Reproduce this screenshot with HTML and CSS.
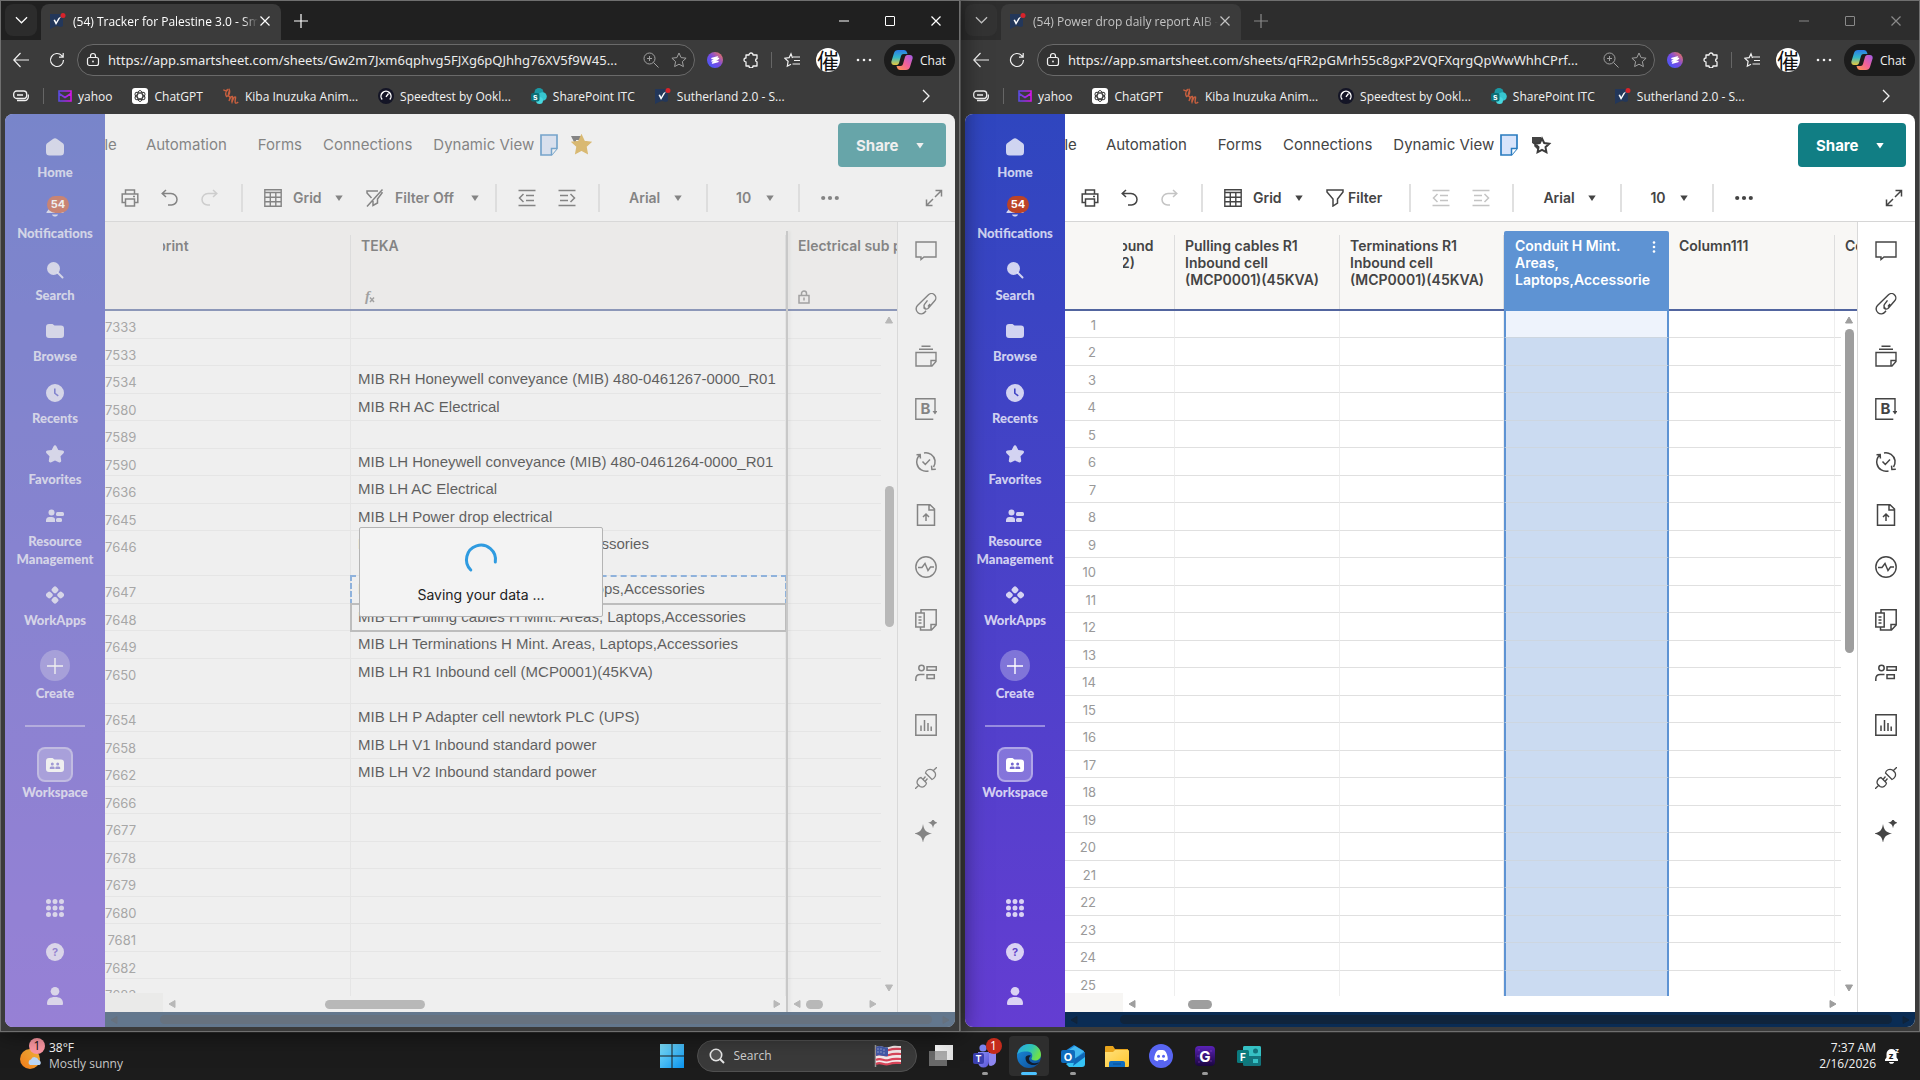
FILE: index.html
```html
<!DOCTYPE html>
<html lang="en">
    <head>
        <meta charset="utf-8">
        <title>Desktop</title>
        <link rel="stylesheet" href="styles.css">
    </head>
    <body>
        <svg class="sprite" aria-hidden="true">
            <defs>
                <linearGradient id="g-yahoo" x1="0" x2="1"><stop offset="0" stop-color="#5a4be0"/><stop offset="1" stop-color="#d414e8"/></linearGradient>
                <linearGradient id="g-ext" x1="0" y1="1" x2="1" y2="0"><stop offset="0" stop-color="#3a5bff"/><stop offset=".5" stop-color="#7a4be0"/><stop offset="1" stop-color="#ff7a4a"/></linearGradient>
                <linearGradient id="g-cop1" x1="0" y1="0" x2="0" y2="1"><stop offset="0" stop-color="#2a7be8"/><stop offset=".5" stop-color="#35b8c8"/><stop offset="1" stop-color="#e8c83a"/></linearGradient>
                <linearGradient id="g-cop2" x1="1" y1="0" x2="0" y2="1"><stop offset="0" stop-color="#a05be8"/><stop offset=".5" stop-color="#f0609a"/><stop offset="1" stop-color="#ff9a4a"/></linearGradient>
                <linearGradient id="g-win" x1="0" y1="0" x2="1" y2="1"><stop offset="0" stop-color="#7fe0fb"/><stop offset="1" stop-color="#0a93ee"/></linearGradient>
                <linearGradient id="g-sun" x1="1" y1="0" x2="0" y2="1"><stop offset="0" stop-color="#f6b73c"/><stop offset="1" stop-color="#ef7a1a"/></linearGradient>
                <linearGradient id="g-edge" x1="0" y1="0" x2="1" y2=".4"><stop offset="0" stop-color="#2aa9e8"/><stop offset=".6" stop-color="#2fc4b4"/><stop offset="1" stop-color="#6fe04a"/></linearGradient>
                <linearGradient id="g-edge2" x1="0" y1="0" x2="1" y2="1"><stop offset="0" stop-color="#1b8ee0"/><stop offset="1" stop-color="#0c4a94"/></linearGradient>
                <linearGradient id="g-folder" x1="0" y1="0" x2="1" y2="1"><stop offset="0" stop-color="#ffe07a"/><stop offset="1" stop-color="#ffc62e"/></linearGradient>
                <linearGradient id="g-teams" x1="0" y1="0" x2="1" y2="1"><stop offset="0" stop-color="#8d92f5"/><stop offset="1" stop-color="#5a55d8"/></linearGradient>
                <linearGradient id="g-app" x1="0" y1="0" x2="0" y2="1"><stop offset="0" stop-color="#5a22b8"/><stop offset="1" stop-color="#1a0540"/></linearGradient>
                <linearGradient id="g-task" x1="0" y1="0" x2="1" y2="1"><stop offset="0" stop-color="#fff"/><stop offset="1" stop-color="#ddd"/></linearGradient>
            </defs>

            <!-- browser chrome -->
            <symbol id="chevron-down" viewBox="0 0 14 8"><path d="M1 1l6 6 6-6" fill="none" stroke="currentColor" stroke-width="1.3"/></symbol>
            <symbol id="chevron-right" viewBox="0 0 8 14"><path d="M1 1l6 6-6 6" fill="none" stroke="currentColor" stroke-width="1.3"/></symbol>
            <symbol id="smartsheet" viewBox="0 0 16 16"><path d="M0 1h13v12l-2 1-4-1-3 1-4 2z" fill="#23375a"/><path d="M3.5 7l2.500 5L11 3.500 8.500 5 6.200 9 5 6.500z" fill="#fff"/><circle cx="13" cy="2.500" r="2.500" fill="#d8232a"/></symbol>
            <symbol id="close" viewBox="0 0 10 10"><path d="M.5.5l9 9m0-9l-9 9" stroke="currentColor" stroke-width="1.200"/></symbol>
            <symbol id="plus" viewBox="0 0 14 14"><path d="M7 0v14M0 7h14" stroke="currentColor" stroke-width="1.200"/></symbol>
            <symbol id="min" viewBox="0 0 10 10"><path d="M0 5h10" stroke="currentColor"/></symbol>
            <symbol id="max" viewBox="0 0 10 10"><rect x=".5" y=".5" width="9" height="9" rx=".5" fill="none" stroke="currentColor"/></symbol>
            <symbol id="back" viewBox="0 0 16 16"><path d="M16 8H1M7.500 1L.8 8l6.700 7" fill="none" stroke="currentColor" stroke-width="1.200"/></symbol>
            <symbol id="reload" viewBox="0 0 16 16"><path d="M14.500 8A6.500 6.500 0 1 1 12.800 3.600L14 5M14.200 1v4.200H10" fill="none" stroke="currentColor" stroke-width="1.200"/></symbol>
            <symbol id="lock" viewBox="0 0 14 16"><rect x="1.500" y="5.500" width="11" height="8" rx="2" fill="none" stroke="currentColor" stroke-width="1.200"/><path d="M4.500 5.500V4a2.500 2.500 0 0 1 5 0v1.500" fill="none" stroke="currentColor" stroke-width="1.200"/><circle cx="7" cy="9.500" r=".9" fill="currentColor"/></symbol>
            <symbol id="zoom" viewBox="0 0 16 16"><circle cx="6.500" cy="6.500" r="5.500" fill="none" stroke="currentColor"/><path d="M10.500 10.500l5 5M6.500 4v5M4 6.500h5" stroke="currentColor"/></symbol>
            <symbol id="star-line" viewBox="0 0 16 16"><path d="M8 1l2.100 4.600 5 .6-3.700 3.400 1 5L8 12.200l-4.400 2.400 1-5L.9 6.200l5-.6z" fill="none" stroke="currentColor" stroke-linejoin="round"/></symbol>
            <symbol id="ext" viewBox="0 0 16 16"><circle cx="8" cy="8" r="8" fill="url(#g-ext)"/><path d="M5 6.500l5.500-1.500L5 9l6.500-2.500L5.500 11l5.500-1.500" fill="none" stroke="#fff" stroke-width="1.500" stroke-linecap="round" stroke-linejoin="round"/></symbol>
            <symbol id="puzzle" viewBox="0 0 16 16"><path d="M3 3h3a2 2 0 0 1 4 0h4v3.500a1.800 1.800 0 0 0 0 3.500v4h-4a2 2 0 0 1-4 0H3v-4a2 2 0 0 1 0-4z" fill="none" stroke="currentColor" stroke-width="1.300" stroke-linejoin="round"/></symbol>
            <symbol id="favs" viewBox="0 0 16 16"><path d="M8.500 6L7 1.800 5.200 5.600.7 6.200l3.400 3.100-.8 4.900 3.700-2M9 5h7M10 8.500h6M8.500 12H16" fill="none" stroke="currentColor" stroke-width="1.200"/></symbol>
            <symbol id="dots" viewBox="0 0 16 4"><circle cx="2" cy="2" r="1.300" fill="currentColor"/><circle cx="8" cy="2" r="1.300" fill="currentColor"/><circle cx="14" cy="2" r="1.300" fill="currentColor"/></symbol>
            <symbol id="copilot" viewBox="0 0 22 20"><path d="M7 0h6a3 3 0 0 1 3 2.500L16.500 4h-4c-1.500 0-2 .7-2.500 2L8 13c-.5 1.500-1.500 2-3 2H3c-2 0-3-1.500-2.600-3.500L3 3c.6-2 2-3 4-3z" fill="url(#g-cop1)"/><path d="M15 20H9a3 3 0 0 1-3-2.500L5.500 16h4c1.500 0 2-.7 2.500-2L14 7c.5-1.500 1.500-2 3-2h2c2 0 3 1.500 2.600 3.500L19 17c-.6 2-2 3-4 3z" fill="url(#g-cop2)"/></symbol>
            <symbol id="tabs" viewBox="0 0 16 12"><rect x=".7" y="1" width="13" height="7.500" rx="3" fill="none" stroke="currentColor" stroke-width="1.300"/><path d="M4 5h6M15.300 4.500V7a3.500 3.500 0 0 1-3.500 3.500H4" fill="none" stroke="currentColor" stroke-width="1.300"/></symbol>
            <symbol id="mail" viewBox="0 0 14 12"><path d="M1 1h12v10H1zM1 3.500l6 4 6-4" fill="none" stroke="url(#g-yahoo)" stroke-width="1.600"/></symbol>
            <symbol id="gpt" viewBox="0 0 16 16"><rect width="16" height="16" rx="3" fill="#fff"/><g fill="none" stroke="#333" stroke-width=".9"><ellipse cx="8" cy="8" rx="2.700" ry="5.500"/><ellipse cx="8" cy="8" rx="2.700" ry="5.500" transform="rotate(60 8 8)"/><ellipse cx="8" cy="8" rx="2.700" ry="5.500" transform="rotate(120 8 8)"/></g></symbol>
            <symbol id="kiba" viewBox="0 0 16 16"><path d="M.5 1.500c1 2 3 1 5-.5C3 3 2 6 3.500 8.500 6 8 7 5 6.500 2.500c-1.500 4-1.500 6 .5 6.500 0 2-.5 3-1 4 1-3 2.500-5 3.500-4.500.5 1-1 4-.5 5.500 1-3 2.300-5.800 3.500-5 .5 1.500-1.200 4.500 0 6 1 .5 2-.3 2.700-1" fill="none" stroke="#c9603f" stroke-width="1.400"/></symbol>
            <symbol id="speed" viewBox="0 0 16 16"><circle cx="8" cy="8" r="8" fill="#141526"/><path d="M4.200 11.500a5 5 0 1 1 7.600 0M8 8.800l2.500-3.300" fill="none" stroke="#fff" stroke-width="1.400"/></symbol>
            <symbol id="sharepoint" viewBox="0 0 16 16"><circle cx="8" cy="4.500" r="4.500" fill="#1b9aa6"/><circle cx="11.500" cy="8.500" r="4.300" fill="#37c6d0"/><circle cx="8.500" cy="12.500" r="3.500" fill="#48d8e0"/><rect y="5" width="8.500" height="8.500" rx="2" fill="#0b6f77"/><text class="glyph" x="4.200" y="12" font-size="8" fill="#fff">s</text></symbol>

            <!-- sheet side menu -->
            <symbol id="home" viewBox="0 0 18 18"><path d="M0 8c0-1.500.5-2.200 1.500-3L7 1a3.300 3.300 0 0 1 4 0l5.500 4c1 .8 1.500 1.500 1.500 3v6a3.500 3.500 0 0 1-3.500 3.500h-11A3.500 3.500 0 0 1 0 14z" fill="currentColor"/></symbol>
            <symbol id="bell" viewBox="0 0 18 18"><path d="M9 0a6 6 0 0 1 6 6v4l2.500 3v1H.5v-1L3 10V6a6 6 0 0 1 6-6zM6 15.500h6c-.5 1.500-1.600 2-3 2s-2.500-.5-3-2z" fill="currentColor"/></symbol>
            <symbol id="search" viewBox="0 0 18 18"><circle cx="7.500" cy="7.500" r="6.500" fill="currentColor"/><path d="M12 12l4.500 4.500" stroke="currentColor" stroke-width="2" stroke-linecap="round"/></symbol>
            <symbol id="folder" viewBox="0 0 18 18"><path d="M0 5a3 3 0 0 1 3-3h3.500l2 1.500H15a3 3 0 0 1 3 3V13a3 3 0 0 1-3 3H3a3 3 0 0 1-3-3z" fill="currentColor"/></symbol>
            <symbol id="clock" viewBox="0 0 18 18"><path fill-rule="evenodd" d="M9 0a9 9 0 1 1 0 18A9 9 0 0 1 9 0zM8 4.500v5l3.800 3 .9-1.200L9.600 8.900V4.500z" fill="currentColor"/></symbol>
            <symbol id="star" viewBox="0 0 18 18"><path d="M9 .3c.7 0 1.100.4 1.400 1l1.900 3.700 4.200.6c1.400.2 2 1.600 1 2.600l-3 3 .7 4.200c.2 1.500-1.200 2.400-2.500 1.800L9 15.500l-3.700 1.700c-1.300.6-2.700-.3-2.500-1.800l.7-4.200-3-3c-1-1-.4-2.400 1-2.600L5.700 5l1.900-3.700c.3-.6.700-1 1.400-1z" fill="currentColor"/></symbol>
            <symbol id="people" viewBox="0 0 18 18"><circle cx="5.500" cy="5.500" r="3" fill="currentColor"/><path d="M0 15v-1.500A3.500 3.500 0 0 1 3.500 10H6a3.500 3.500 0 0 1 3 1.700V15z" fill="currentColor"/><rect x="10" y="5" width="8" height="4" rx="1.500" fill="currentColor"/><rect x="10" y="11" width="6" height="4" rx="1.500" fill="currentColor"/></symbol>
            <symbol id="apps" viewBox="0 0 18 18"><g fill="currentColor"><rect x="6" y=".8" width="6" height="6" rx="2" transform="rotate(45 9 3.800)"/><rect x="6" y="11.200" width="6" height="6" rx="2" transform="rotate(45 9 14.200)"/><rect x=".3" y="6" width="6" height="6" rx="2" transform="rotate(45 3.300 9)"/><rect x="11.700" y="6" width="6" height="6" rx="2" transform="rotate(45 14.700 9)"/></g></symbol>
            <symbol id="workspace" viewBox="0 0 18 18"><path d="M0 5a3 3 0 0 1 3-3h3.500l2 1.500H15a3 3 0 0 1 3 3V13a3 3 0 0 1-3 3H3a3 3 0 0 1-3-3z" fill="#fff"/><g fill="#7468cf"><circle cx="6.300" cy="8" r="1.500"/><circle cx="11.700" cy="8" r="1.500"/><path d="M3.800 13v-1.200c0-1 .8-1.400 2.500-1.400s2.300.4 2.300 1.400V13zM9.400 13v-1.200c0-1 .6-1.400 2.300-1.400s2.500.4 2.500 1.400V13z"/></g></symbol>
            <symbol id="grid9" viewBox="0 0 18 18"><path d="M2.500 2.500h0M9 2.500h0M15.500 2.500h0M2.500 9h0M9 9h0M15.500 9h0M2.500 15.500h0M9 15.500h0M15.500 15.500h0" stroke="currentColor" stroke-width="5" stroke-linecap="round"/></symbol>
            <symbol id="help" viewBox="0 0 18 18"><circle cx="9" cy="9" r="9" fill="currentColor"/><text class="glyph" x="9" y="13" font-size="11" fill="#6246c8">?</text></symbol>
            <symbol id="user" viewBox="0 0 18 18"><circle cx="9" cy="4.300" r="4.300" fill="currentColor"/><path d="M1 16.500C1 12 4 10 9 10s8 2 8 6.500c0 1-.5 1.500-1.500 1.500h-13C1.500 18 1 17.500 1 16.500z" fill="currentColor"/></symbol>

            <!-- sheet toolbar -->
            <symbol id="doc" viewBox="0 0 18 22"><path d="M1 1h16v13.500L11.500 21H1z" fill="#d8e4fb" stroke="#2b7cc0" stroke-width="1.700"/><path d="M17 14.500h-5.500V21" fill="#fff" stroke="#2b7cc0" stroke-width="1.500"/></symbol>
            <symbol id="print" viewBox="0 0 18 18"><path d="M4.500 5V1h9v4M4.500 13.500H1.200V5h15.600v8.500h-3.300M4.500 10h9v7h-9z" fill="none" stroke="currentColor" stroke-width="1.500"/><path d="M12 7.500h2" stroke="currentColor" stroke-width="1.500"/></symbol>
            <symbol id="undo" viewBox="0 0 18 18"><path d="M5 1L1.200 4.500 5 8M1.500 4.500H10a6 6 0 0 1 6 6 5.500 5.500 0 0 1-5.500 5.500H7" fill="none" stroke="currentColor" stroke-width="1.500"/></symbol>
            <symbol id="redo" viewBox="0 0 18 18"><path d="M12 1l3.800 3.500L12 8M15.500 4.500H7a6 6 0 0 0-6 6A5.500 5.500 0 0 0 6.500 16H9" fill="none" stroke="currentColor" stroke-width="1.500"/></symbol>
            <symbol id="table" viewBox="0 0 18 18"><path d="M.8.8h16.400v16.400H.8zM.8 3.500h16.400M.8 8.200h16.400M.8 12.800h16.400M6.300 3.500v13.700M11.800 3.500v13.700" fill="none" stroke="currentColor" stroke-width="1.400"/></symbol>
            <symbol id="funnel" viewBox="0 0 18 18"><path d="M1 1h16v2l-5.500 7v4L7 17v-7L1 3z" fill="none" stroke="currentColor" stroke-width="1.500"/></symbol>
            <symbol id="funnel-off" viewBox="0 0 18 18"><path d="M12 2H1v2l4.500 5M16 3v1l-4.500 6v4L7 16.500V12M16.500.5L1 17.500" fill="none" stroke="currentColor" stroke-width="1.500"/></symbol>
            <symbol id="outdent" viewBox="0 0 18 18"><path d="M.5 1.500h17M.5 16.500h17M8 6.500h8M8 11.500h8M5.500 5L1.500 9l4 4" fill="none" stroke="currentColor" stroke-width="1.500"/></symbol>
            <symbol id="indent" viewBox="0 0 18 18"><path d="M.5 1.500h17M.5 16.500h17M2 6.500h8M2 11.500h8M12.500 5l4 4-4 4" fill="none" stroke="currentColor" stroke-width="1.500"/></symbol>
            <symbol id="more" viewBox="0 0 18 18"><circle cx="2.200" cy="9" r="2.100" fill="currentColor"/><circle cx="9" cy="9" r="2.100" fill="currentColor"/><circle cx="15.800" cy="9" r="2.100" fill="currentColor"/></symbol>
            <symbol id="kebab" viewBox="0 0 4 12"><circle cx="2" cy="1.500" r="1.300" fill="currentColor"/><circle cx="2" cy="6" r="1.300" fill="currentColor"/><circle cx="2" cy="10.500" r="1.300" fill="currentColor"/></symbol>
            <symbol id="expand" viewBox="0 0 18 18"><path d="M10.500 1.500h6v6M16.500 1.500L10 8M7.500 16.500h-6v-6M1.500 16.500L8 10" fill="none" stroke="currentColor" stroke-width="1.500"/></symbol>
            <symbol id="caret" viewBox="0 0 8 6"><path d="M.3.500h7.400L4 6z" fill="currentColor"/></symbol>
            <symbol id="tri" viewBox="0 0 8 8"><path d="M7 .5v7L1 4z" fill="currentColor" stroke="currentColor" stroke-linejoin="round"/></symbol>
            <symbol id="fx" viewBox="0 0 12 14"><text class="glyph serif" x="4.500" y="11" font-size="15" fill="currentColor">f</text><path d="M7 7.500l4 4.500M11 7.500L7 12" stroke="currentColor" stroke-width="1.500"/></symbol>
            <symbol id="padlock" viewBox="0 0 12 14"><path d="M1 5.500h10v7.500H1zM3.500 5.500V3.500a2.500 2.500 0 0 1 5 0v2M6 7.500v3" fill="none" stroke="currentColor" stroke-width="1.500"/></symbol>

            <!-- right rail -->
            <symbol id="chat" viewBox="0 0 22 22"><path d="M1 2h20v15H9l-3 2.500V17H1z" fill="none" stroke="currentColor" stroke-width="1.400"/></symbol>
            <symbol id="clip" viewBox="0 0 22 22"><path d="M10.500 15.500a3 3 0 0 1-1-4.200l3-4M13 13.500l2-2.500M13 15.500l6.500-7.500a4.200 4.200 0 0 0-6-6.200L2.500 12.500a5 5 0 0 0 .5 7.300 5 5 0 0 0 7-.8l1-1.200M8.500 14.500c1 1.800 3 2 4.500 1" fill="none" stroke="currentColor" stroke-width="1.400"/></symbol>
            <symbol id="cards" viewBox="0 0 22 22"><path d="M1 7.500h20v9l-4 4.500H1zM21 15.500h-5V21M4 4.200h14M6.500 1.200h9" fill="none" stroke="currentColor" stroke-width="1.400"/></symbol>
            <symbol id="bdown" viewBox="0 0 22 22"><path d="M20 9V.8H.8v20.400h17.500M20 9v6" fill="none" stroke="currentColor" stroke-width="1.400"/><path d="M17.500 13h5L20 16.500z" fill="currentColor"/><text class="glyph" x="10.500" y="16" font-size="15" fill="currentColor">B</text></symbol>
            <symbol id="sync" viewBox="0 0 22 22"><path d="M9 2a9.300 9.300 0 0 1 11 7.500c.3 2.200 0 4-1.500 6.500M13.500 20A9.300 9.300 0 0 1 2 13C1.300 9.500 2.200 6.500 4.500 4.200M1.500 3.700l3.700-.2.200 4M20.800 18.200l-3.900.3-.4-3.900M7.500 10.500l2.800 3 4.700-5" fill="none" stroke="currentColor" stroke-width="1.500"/></symbol>
            <symbol id="upload" viewBox="0 0 22 22"><path d="M2.500.8H15L19.500 5v16.200h-17zM14 .8V6h5.500M11 17v-6.500M8 13l3-3 3 3" fill="none" stroke="currentColor" stroke-width="1.500"/></symbol>
            <symbol id="pulse" viewBox="0 0 22 22"><circle cx="11" cy="11" r="10.200" fill="none" stroke="currentColor" stroke-width="1.400"/><path d="M3 11.500h4l3-4 3 7 2.500-3.500H19" fill="none" stroke="currentColor" stroke-width="1.400"/></symbol>
            <symbol id="copydoc" viewBox="0 0 22 22"><path d="M6 4V.8h15.200V16L16.500 21H5.500v-3M21.200 15.500H16V21M.8 4h8.400v14H.8zM3.500 8h3M3.500 11h3M3.500 14h3" fill="none" stroke="currentColor" stroke-width="1.500"/></symbol>
            <symbol id="contacts" viewBox="0 0 22 22"><circle cx="6.500" cy="6" r="2.700" fill="none" stroke="currentColor" stroke-width="1.500"/><path d="M.8 19v-2c0-3 2-4.500 4.500-4.500H9.500M12 4.800h9.300v3.500H12zM12 12.800h7.300v3.700H12z" fill="none" stroke="currentColor" stroke-width="1.500"/></symbol>
            <symbol id="chart" viewBox="0 0 22 22"><path d="M.8.8h20.400v20.400H.8zM6 11.500V17M9.500 6v11M13 9v8M16.200 12.500V17" fill="none" stroke="currentColor" stroke-width="1.500"/></symbol>
            <symbol id="plug" viewBox="0 0 22 22"><path d="M0 22l4-4M22 0l-4 4M10.500 6l6.500 6.500c2.500-1 4.500-4 3-7l-2.500-2.500c-3-1.700-6.500 0-7 3zM11.500 16L6 10.500c-3 .7-4.800 4-3.500 6.500l2.500 2.500c3 1.500 6-.5 6.500-3.500M8 12.500l2.500-3M10 14.500l2.500-3" fill="none" stroke="currentColor" stroke-width="1.300"/></symbol>
            <symbol id="sparkle" viewBox="0 0 22 22"><path d="M8 4c1 6 2.500 8 9 9.500C10.500 15 9 17 8 23c-1-6-2.500-8-9-9.500C5.500 12 7 10 8 4zM18-2.500c.6 3.300 1.500 4.500 5 5.300-3.500.9-4.400 2-5 5.400-.6-3.400-1.500-4.500-5-5.400 3.500-.8 4.400-2 5-5.300z" fill="currentColor"/></symbol>
        </svg>

        <!-- parts that every browser window repeats -->
        <template id="t-extensions">
            <svg width="16" height="16"><use href="#ext"/></svg>
            <svg width="16" height="16"><use href="#puzzle"/></svg>
            <span class="vline"></span>
            <svg width="16" height="16"><use href="#favs"/></svg>
            <span class="avatar">催</span>
            <svg width="16" height="4"><use href="#dots"/></svg>
        </template>
        <template id="t-bookmarks">
            <svg width="16" height="12"><use href="#tabs"/></svg>
            <span class="vline"></span>
            <a href="#"><svg width="14" height="12"><use href="#mail"/></svg>yahoo</a>
            <a href="#"><svg width="16" height="16"><use href="#gpt"/></svg>ChatGPT</a>
            <a href="#"><svg width="16" height="16"><use href="#kiba"/></svg>Kiba Inuzuka Anim...</a>
            <a href="#"><svg width="16" height="16"><use href="#speed"/></svg>Speedtest by Ookl...</a>
            <a href="#"><svg width="16" height="16"><use href="#sharepoint"/></svg>SharePoint ITC</a>
            <a href="#"><svg width="16" height="16"><use href="#smartsheet"/></svg>Sutherland 2.0 - S...</a>
            <button class="overflow" aria-label="More bookmarks"><svg width="8" height="14"><use href="#chevron-right"/></svg></button>
        </template>
        <template id="t-side">
            <div class="side-main">
                <a href="#"><svg width="18" height="18"><use href="#home"/></svg>Home</a>
                <a href="#"><svg width="18" height="18"><use href="#bell"/></svg><span class="badge">54</span>Notifications</a>
                <a href="#"><svg width="18" height="18"><use href="#search"/></svg>Search</a>
                <a href="#"><svg width="18" height="18"><use href="#folder"/></svg>Browse</a>
                <a href="#"><svg width="18" height="18"><use href="#clock"/></svg>Recents</a>
                <a href="#"><svg width="18" height="18"><use href="#star"/></svg>Favorites</a>
                <a href="#"><svg width="18" height="18"><use href="#people"/></svg><span>Resource<br>Management</span></a>
                <a href="#"><svg width="18" height="18"><use href="#apps"/></svg>WorkApps</a>
            </div>
            <a class="create" href="#"><span><svg width="16" height="16"><use href="#plus"/></svg></span>Create</a>
            <hr>
            <a class="space" href="#"><span><svg width="18" height="18"><use href="#workspace"/></svg></span>Workspace</a>
            <div class="side-bottom">
                <svg width="18" height="18"><use href="#grid9"/></svg>
                <svg width="18" height="18"><use href="#help"/></svg>
                <svg width="18" height="18"><use href="#user"/></svg>
            </div>
        </template>
        <template id="t-rail">
            <div>
                <svg width="22" height="22"><use href="#chat"/></svg>
                <svg width="22" height="22"><use href="#clip"/></svg>
                <svg width="22" height="22"><use href="#cards"/></svg>
                <svg width="22" height="22"><use href="#bdown"/></svg>
                <svg width="22" height="22"><use href="#sync"/></svg>
                <svg width="22" height="22"><use href="#upload"/></svg>
                <svg width="22" height="22"><use href="#pulse"/></svg>
                <svg width="22" height="22"><use href="#copydoc"/></svg>
                <svg width="22" height="22"><use href="#contacts"/></svg>
                <svg width="22" height="22"><use href="#chart"/></svg>
                <svg width="22" height="22"><use href="#plug"/></svg>
                <svg width="22" height="22"><use href="#sparkle"/></svg>
            </div>
        </template>

        <div class="desktop">
            <div class="windows">
                <section class="window active">
                    <div class="tabstrip">
                        <button class="tab-menu" aria-label="Tab actions"><svg width="13" height="8"><use href="#chevron-down"/></svg></button>
                        <div class="tab">
                            <svg width="16" height="16"><use href="#smartsheet"/></svg>
                            <span class="tab-title">(54) Tracker for Palestine 3.0 - Smartsheet</span>
                            <button aria-label="Close tab"><svg width="10" height="10"><use href="#close"/></svg></button>
                        </div>
                        <button class="new-tab" aria-label="New tab"><svg width="14" height="14"><use href="#plus"/></svg></button>
                        <div class="controls">
                            <button aria-label="Minimize"><svg width="10" height="10"><use href="#min"/></svg></button>
                            <button aria-label="Maximize"><svg width="10" height="10"><use href="#max"/></svg></button>
                            <button aria-label="Close"><svg width="10" height="10"><use href="#close"/></svg></button>
                        </div>
                    </div>
                    <div class="addressbar">
                        <button aria-label="Back"><svg width="16" height="16"><use href="#back"/></svg></button>
                        <button class="reload" aria-label="Reload"><svg width="16" height="16"><use href="#reload"/></svg></button>
                        <div class="url">
                            <svg width="14" height="16"><use href="#lock"/></svg>
                            <input type="text" aria-label="Address" value="https://app.smartsheet.com/sheets/Gw2m7Jxm6qphvg5FJXg6pQJhhg76XV5f9W45...">
                            <svg class="dim" width="16" height="16"><use href="#zoom"/></svg>
                            <svg class="dim" width="16" height="16"><use href="#star-line"/></svg>
                        </div>
                        <div class="extensions" data-part="t-extensions"></div>
                        <button class="chat"><svg width="22" height="20"><use href="#copilot"/></svg>Chat</button>
                    </div>
                    <div class="bookmarks" data-part="t-bookmarks"></div>

                    <div class="page">
                        <nav class="side" data-part="t-side"></nav>
                        <div class="app">
                            <div class="menubar">
                                <a class="cut" href="#">File</a>
                                <a class="wide" href="#">Automation</a>
                                <a href="#">Forms</a>
                                <a href="#">Connections</a>
                                <a href="#">Dynamic View</a>
                                <svg class="doc" width="18" height="22"><use href="#doc"/></svg>
                                <svg class="fav" width="20" height="20" viewBox="0 0 20 20"><path d="M0 1h10v4H5v6z" fill="#444"/><path d="M10.500.5l2.800 6 6.200.7-4.600 4.300 1.200 6.500-5.600-3-5.600 3 1.200-6.500L1.500 7.200l6.200-.7z" fill="#d9a125" stroke="#d9a125" stroke-width="1.500"/></svg>
                                <button class="share">Share <svg width="8" height="7"><use href="#caret"/></svg></button>
                            </div>
                            <div class="toolbar">
                                <svg width="18" height="18"><use href="#print"/></svg>
                                <svg width="18" height="18"><use href="#undo"/></svg>
                                <svg class="off" width="18" height="18"><use href="#redo"/></svg>
                                <span class="sep"></span>
                                <label class="drop view"><svg width="18" height="18"><use href="#table"/></svg><select aria-label="View"><option>Grid</option></select><svg width="8" height="6"><use href="#caret"/></svg></label>
                                <label class="drop filter"><svg width="18" height="18"><use href="#funnel-off"/></svg><select aria-label="Filter"><option>Filter Off</option></select><svg width="8" height="6"><use href="#caret"/></svg></label>
                                <span class="sep"></span>
                                <svg width="18" height="18"><use href="#outdent"/></svg>
                                <svg width="18" height="18"><use href="#indent"/></svg>
                                <span class="sep"></span>
                                <label class="drop font"><select aria-label="Font"><option>Arial</option></select><svg width="8" height="6"><use href="#caret"/></svg></label>
                                <span class="sep"></span>
                                <label class="drop size"><select aria-label="Font size"><option>10</option></select><svg width="8" height="6"><use href="#caret"/></svg></label>
                                <span class="sep"></span>
                                <svg width="18" height="18"><use href="#more"/></svg>
                                <svg class="expand" width="18" height="18"><use href="#expand"/></svg>
                            </div>
                            <div class="work">
                                <div class="sheet tracker">
                                    <div class="grid">
                                        <table>
                                            <colgroup><col class="c-num"><col class="c-print"><col><col class="c-panel"></colgroup>
                                            <thead>
                                                <tr>
                                                    <th></th>
                                                    <th class="scrolled"><div>print</div></th>
                                                    <th>TEKA<svg class="mark" width="12" height="14"><use href="#fx"/></svg></th>
                                                    <th>Electrical sub panel<svg class="mark" width="12" height="14"><use href="#padlock"/></svg></th>
                                                </tr>
                                            </thead>
                                            <tbody>
                                                <tr><td>7333</td><td></td><td></td><td></td></tr>
                                                <tr class="s"><td>7533</td><td></td><td></td><td></td></tr>
                                                <tr><td>7534</td><td></td><td>MIB RH Honeywell conveyance (MIB) 480-0461267-0000_R01</td><td></td></tr>
                                                <tr class="s"><td>7580</td><td></td><td>MIB RH AC Electrical</td><td></td></tr>
                                                <tr><td>7589</td><td></td><td></td><td></td></tr>
                                                <tr class="s"><td>7590</td><td></td><td>MIB LH Honeywell conveyance (MIB) 480-0461264-0000_R01</td><td></td></tr>
                                                <tr><td>7636</td><td></td><td>MIB LH AC Electrical</td><td></td></tr>
                                                <tr class="s"><td>7645</td><td></td><td>MIB LH Power drop electrical</td><td></td></tr>
                                                <tr class="tall"><td>7646</td><td></td><td>MIB LH H Mint. Areas, Laptops,Accessories</td><td></td></tr>
                                                <tr><td>7647</td><td></td><td class="copied">MIB LH Conduit H Mint. Areas, Laptops,Accessories</td><td></td></tr>
                                                <tr class="s"><td>7648</td><td></td><td class="current">MIB LH Pulling cables H Mint. Areas, Laptops,Accessories</td><td></td></tr>
                                                <tr><td>7649</td><td></td><td>MIB LH Terminations H Mint. Areas, Laptops,Accessories</td><td></td></tr>
                                                <tr class="tall"><td>7650</td><td></td><td>MIB LH R1 Inbound cell (MCP0001)(45KVA)</td><td></td></tr>
                                                <tr><td>7654</td><td></td><td>MIB LH P Adapter cell newtork PLC (UPS)</td><td></td></tr>
                                                <tr class="s"><td>7658</td><td></td><td>MIB LH V1 Inbound standard power</td><td></td></tr>
                                                <tr><td>7662</td><td></td><td>MIB LH V2 Inbound standard power</td><td></td></tr>
                                                <tr class="s"><td>7666</td><td></td><td></td><td></td></tr>
                                                <tr><td>7677</td><td></td><td></td><td></td></tr>
                                                <tr class="s"><td>7678</td><td></td><td></td><td></td></tr>
                                                <tr><td>7679</td><td></td><td></td><td></td></tr>
                                                <tr class="s"><td>7680</td><td></td><td></td><td></td></tr>
                                                <tr><td>7681</td><td></td><td></td><td></td></tr>
                                                <tr class="s"><td>7682</td><td></td><td></td><td></td></tr>
                                                <tr><td>7683</td><td></td><td></td><td></td></tr>
                                            </tbody>
                                        </table>
                                        <div class="vbar"><svg class="up" width="8" height="8"><use href="#tri"/></svg><i class="thumb"></i><svg class="down" width="8" height="8"><use href="#tri"/></svg></div>
                                    </div>
                                    <div class="hbars">
                                        <span class="corner"></span>
                                        <div class="hbar"><svg width="8" height="8"><use href="#tri"/></svg><i class="thumb"></i><svg class="next" width="8" height="8"><use href="#tri"/></svg></div>
                                        <div class="hbar panel"><svg width="8" height="8"><use href="#tri"/></svg><i class="thumb"></i><svg class="next" width="8" height="8"><use href="#tri"/></svg></div>
                                    </div>
                                    <span class="splitter"></span>
                                </div>
                                <div class="rail" data-part="t-rail"></div>
                            </div>
                            <div class="pagebar"><svg width="8" height="8"><use href="#tri"/></svg><i></i><svg class="next" width="8" height="8"><use href="#tri"/></svg></div>
                        </div>
                        <div class="overlay">
                            <div class="saving">
                                <svg width="34" height="34" viewBox="0 0 34 34"><path d="M6.800 28A14.500 14.500 0 1 1 31.300 20" fill="none" stroke="#2f9be0" stroke-width="3" stroke-linecap="round"/></svg>
                                Saving your data ...
                            </div>
                        </div>
                    </div>
                </section>

                <section class="window">
                    <div class="tabstrip">
                        <button class="tab-menu" aria-label="Tab actions"><svg width="13" height="8"><use href="#chevron-down"/></svg></button>
                        <div class="tab">
                            <svg width="16" height="16"><use href="#smartsheet"/></svg>
                            <span class="tab-title">(54) Power drop daily report AIB - Smartsheet</span>
                            <button aria-label="Close tab"><svg width="10" height="10"><use href="#close"/></svg></button>
                        </div>
                        <button class="new-tab" aria-label="New tab"><svg width="14" height="14"><use href="#plus"/></svg></button>
                        <div class="controls">
                            <button aria-label="Minimize"><svg width="10" height="10"><use href="#min"/></svg></button>
                            <button aria-label="Maximize"><svg width="10" height="10"><use href="#max"/></svg></button>
                            <button aria-label="Close"><svg width="10" height="10"><use href="#close"/></svg></button>
                        </div>
                    </div>
                    <div class="addressbar">
                        <button aria-label="Back"><svg width="16" height="16"><use href="#back"/></svg></button>
                        <button class="reload" aria-label="Reload"><svg width="16" height="16"><use href="#reload"/></svg></button>
                        <div class="url">
                            <svg width="14" height="16"><use href="#lock"/></svg>
                            <input type="text" aria-label="Address" value="https://app.smartsheet.com/sheets/qFR2pGMrh55c8gxP2VQFXqrgQpWwWhhCPrf...">
                            <svg class="dim" width="16" height="16"><use href="#zoom"/></svg>
                            <svg class="dim" width="16" height="16"><use href="#star-line"/></svg>
                        </div>
                        <div class="extensions" data-part="t-extensions"></div>
                        <button class="chat"><svg width="22" height="20"><use href="#copilot"/></svg>Chat</button>
                    </div>
                    <div class="bookmarks" data-part="t-bookmarks"></div>

                    <div class="page">
                        <nav class="side" data-part="t-side"></nav>
                        <div class="app">
                            <div class="menubar">
                                <a class="cut" href="#">File</a>
                                <a class="wide" href="#">Automation</a>
                                <a href="#">Forms</a>
                                <a href="#">Connections</a>
                                <a href="#">Dynamic View</a>
                                <svg class="doc" width="18" height="22"><use href="#doc"/></svg>
                                <svg class="fav" width="20" height="20" viewBox="0 0 20 20"><path d="M1 2h9v9l-3 4-4-4 1-2-3-1z" fill="#444"/><path d="M11 3.500l2.200 4.500 5 .7-3.700 3.500.9 5L11 14.800l-4.400 2.400.9-5-3.700-3.500 5-.7z" fill="#fff" stroke="#3c3c3c" stroke-width="2"/></svg>
                                <button class="share">Share <svg width="8" height="7"><use href="#caret"/></svg></button>
                            </div>
                            <div class="toolbar">
                                <svg width="18" height="18"><use href="#print"/></svg>
                                <svg width="18" height="18"><use href="#undo"/></svg>
                                <svg class="off" width="18" height="18"><use href="#redo"/></svg>
                                <span class="sep"></span>
                                <label class="drop view"><svg width="18" height="18"><use href="#table"/></svg><select aria-label="View"><option>Grid</option></select><svg width="8" height="6"><use href="#caret"/></svg></label>
                                <button class="filter-btn"><svg width="18" height="18"><use href="#funnel"/></svg>Filter</button>
                                <span class="sep"></span>
                                <svg class="off" width="18" height="18"><use href="#outdent"/></svg>
                                <svg class="off" width="18" height="18"><use href="#indent"/></svg>
                                <span class="sep"></span>
                                <label class="drop font"><select aria-label="Font"><option>Arial</option></select><svg width="8" height="6"><use href="#caret"/></svg></label>
                                <span class="sep"></span>
                                <label class="drop size"><select aria-label="Font size"><option>10</option></select><svg width="8" height="6"><use href="#caret"/></svg></label>
                                <span class="sep"></span>
                                <svg width="18" height="18"><use href="#more"/></svg>
                                <svg class="expand" width="18" height="18"><use href="#expand"/></svg>
                            </div>
                            <div class="work">
                                <div class="sheet report">
                                    <div class="grid">
                                        <table>
                                            <colgroup><col class="c-num"><col class="c-rest"><col class="c-data"><col class="c-before"><col class="c-data"><col class="c-after"><col></colgroup>
                                            <thead>
                                                <tr>
                                                    <th></th>
                                                    <th class="scrolled"><div>Inbound<br>(R22)</div></th>
                                                    <th>Pulling cables R1 Inbound cell (MCP0001)(45KVA)</th>
                                                    <th>Terminations R1 Inbound cell (MCP0001)(45KVA)</th>
                                                    <th class="sel"><div>Conduit H Mint.<br>Areas,<br>Laptops,Accessorie<button aria-label="Column menu"><svg width="4" height="12"><use href="#kebab"/></svg></button></div></th>
                                                    <th>Column111</th>
                                                    <th>Column112</th>
                                                </tr>
                                            </thead>
                                            <tbody id="report-rows"></tbody>
                                        </table>
                                        <div class="vbar"><svg class="up" width="8" height="8"><use href="#tri"/></svg><i class="thumb"></i><svg class="down" width="8" height="8"><use href="#tri"/></svg></div>
                                    </div>
                                    <div class="hbars">
                                        <span class="corner"></span>
                                        <div class="hbar"><svg width="8" height="8"><use href="#tri"/></svg><i class="thumb"></i><svg class="next" width="8" height="8"><use href="#tri"/></svg></div>
                                    </div>
                                </div>
                                <div class="rail" data-part="t-rail"></div>
                            </div>
                            <div class="pagebar"><svg width="8" height="8"><use href="#tri"/></svg><i></i><svg class="next" width="8" height="8"><use href="#tri"/></svg></div>
                        </div>
                    </div>
                </section>
            </div>

            <footer class="taskbar">
                <button class="weather">
                    <svg width="26" height="28" viewBox="0 0 26 28"><circle cx="10" cy="17" r="10" fill="url(#g-sun)"/><path d="M10 23a3 3 0 0 1 1-5.500 4 4 0 0 1 7.500.5 2.700 2.700 0 0 1 1 5z" fill="#b9d6f7"/></svg>
                    <span class="alert">1</span>
                    <span><b>38°F</b><br>Mostly sunny</span>
                </button>
                <div class="apps">
                    <button aria-label="Start"><svg width="24" height="24" viewBox="0 0 24 24"><path d="M0 0h11.500v11.500H0zM12.500 0H24v11.500H12.500zM0 12.500h11.500V24H0zM12.500 12.500H24V24H12.500z" fill="url(#g-win)"/></svg></button>
                    <div class="find">
                        <svg width="16" height="16" viewBox="0 0 16 16"><circle cx="7" cy="7" r="5.700" fill="#555" stroke="#e6e6e6" stroke-width="1.600"/><path d="M11 11l4 4" stroke="#e6e6e6" stroke-width="2"/></svg>
                        <input type="text" placeholder="Search" aria-label="Search">
                        <svg width="27" height="24" viewBox="0 0 27 24"><path d="M1.500 1v22" stroke="#999" stroke-width="1.500"/><path d="M2 3c5-3 8 2 13 0s8-1 12-1v17c-5 0-7-1-12 1s-8-2-13 0z" fill="#f3e9ea"/><path d="M2 6c5-3 8 2 13 0s8-1 12-1M2 11c5-3 8 2 13 0s8-1 12-1M2 16c5-3 8 2 13 0s8-1 12-1M2 20c5-3 8 2 13 0s8-1 12-1" fill="none" stroke="#d9465a" stroke-width="2.200"/><path d="M2 3c4-2.500 7 .5 12 .5V12c-5 1-8-2-12 0z" fill="#4459a8"/><path d="M4 5h0M7 5h0M10 6h0M4 8h0M7 8h0M10 9h0" stroke="#fff" stroke-linecap="round"/></svg>
                    </div>
                    <button aria-label="Task view"><svg width="24" height="24" viewBox="0 0 24 24"><path d="M0 7h18v15H0z" fill="#6a6a6a"/><path d="M6 1h18v15H6z" fill="url(#g-task)"/><path d="M6 7h12v9H6z" fill="#aaa"/></svg></button>
                    <button class="running" aria-label="Teams"><svg width="24" height="24" viewBox="0 0 24 24"><circle cx="10" cy="4" r="3.600" fill="#7d84f0"/><circle cx="18" cy="5.500" r="2.800" fill="#6a6fe0"/><path d="M5 8h11v10a5.500 5.500 0 0 1-11 0z" fill="url(#g-teams)"/><path d="M16 9h7v8a5 5 0 0 1-7 4.500z" fill="#8d86f0"/><rect x="0" y="9" width="11" height="11" rx="2" fill="#3b3fae"/><text class="glyph" x="5.500" y="18" font-size="9" fill="#fff">T</text></svg><span class="alert red">1</span></button>
                    <button class="focused" aria-label="Edge"><svg width="24" height="24" viewBox="0 0 24 24"><circle cx="12" cy="12" r="12" fill="url(#g-edge2)"/><path d="M.2 10.500C1.500 4 6.500 0 12.500 0 19.500 0 24 5 24 10.500c0 4-3 6-6 6-2.500 0-4-1-3.500-2.200 2-3 .2-6.800-4-6.800C6 7.500 2 8 .2 10.500z" fill="url(#g-edge)"/><path d="M8.500 14c0 5 4.500 7.500 9 7 2-.3 4-1.500 4.500-2.800-5 2.300-9.500.3-10-3-.2-2 1-3 2-3.500-2.500-1-5.500 0-5.500 2.300z" fill="#111d2e"/></svg></button>
                    <button class="running" aria-label="Outlook"><svg width="24" height="24" viewBox="0 0 24 24"><path d="M4 7l9-6 10 6v10H4z" fill="#1a8ae0"/><path d="M5 8l9-6 9 5.500-9 7z" fill="#44b8f0"/><path d="M24 8v12a3 3 0 0 1-3 3H8l-3-3z" fill="#35c3f5"/><path d="M14 14.500L24 8v5L12 22z" fill="#1066b5"/><rect y="6" width="14" height="13" rx="2" fill="#0f6cbd"/><text class="glyph" x="7" y="16.500" font-size="11" fill="#fff">O</text></svg></button>
                    <button aria-label="File Explorer"><svg width="24" height="24" viewBox="0 0 24 24"><path d="M0 3a1 1 0 0 1 1-1h7l2 3h13v5H0z" fill="#e8a41c"/><path d="M0 8h8l2-2h13a1 1 0 0 1 1 1v15a1 1 0 0 1-1 1H0z" fill="url(#g-folder)"/><path d="M4 23v-4a2 2 0 0 1 2-2h12a2 2 0 0 1 2 2v4z" fill="#0f6cc0"/><path d="M8 20h8" stroke="#0a4c90"/></svg></button>
                    <button aria-label="Discord"><svg width="24" height="24" viewBox="0 0 24 24"><circle cx="12" cy="12" r="12" fill="#5865f2"/><path d="M8.500 6.500c2-.6 5-.6 7 0 2 1.500 3.300 5.500 3.300 9-1.200 1-2.300 1.500-3.500 1.800l-1-1.500c-1.500.4-3.200.4-4.600 0l-1 1.500c-1.200-.3-2.300-.8-3.500-1.800 0-3.500 1.300-7.500 3.300-9z" fill="#fff"/><circle cx="9.500" cy="12.300" r="1.500" fill="#5865f2"/><circle cx="14.500" cy="12.300" r="1.500" fill="#5865f2"/></svg></button>
                    <button class="running" aria-label="G"><svg width="20" height="20" viewBox="0 0 20 20"><rect width="20" height="20" rx="4" fill="url(#g-app)"/><text class="glyph" x="10" y="15.500" font-size="15" fill="#fff">G</text><path d="M4 4h0M16 5h0M4 16h0M16 15h0M3 10h0" stroke="#c06be8" stroke-linecap="round"/></svg></button>
                    <button aria-label="Forms"><svg width="24" height="24" viewBox="0 0 24 24"><rect x="6" y="2" width="18" height="20" rx="1.500" fill="#13747c"/><path d="M6 3.500A1.500 1.500 0 0 1 7.500 2h15A1.500 1.500 0 0 1 24 3.500V12H6z" fill="#35c1c4"/><circle cx="18.500" cy="7" r="2.500" fill="#13747c"/><rect x="16" y="15" width="5" height="4" fill="#35c1c4"/><rect y="6" width="12" height="13" rx="1.500" fill="#0b7a7d"/><text class="glyph" x="6" y="16.500" font-size="10" fill="#fff">F</text></svg></button>
                </div>
                <div class="tray">
                    <span>7:37 AM<br>2/16/2026</span>
                    <svg width="15" height="16" viewBox="0 0 15 16"><path d="M6.500 1a5 5 0 0 1 5 5v3.500l1.500 2V13H0v-1.500l1.500-2V6a5 5 0 0 1 5-5zM4 14h5c0 1-1 1.800-2.500 1.800S4 15 4 14z" fill="#fff"/><text class="glyph" x="6" y="10.500" font-size="9" fill="#1c1c1c">z</text><text class="glyph" x="12" y="5" font-size="7" fill="#fff">z</text></svg>
                </div>
            </footer>
        </div>

        <script src="script.js"></script>
    </body>
</html>
```
FILE: script.js
```js
document.querySelectorAll("[data-part]").forEach(element => {
    let template = document.getElementById(element.dataset.part)
    element.append(template.content.cloneNode(true))
})

let rows = ""
for (let i = 1; i <= 25; i++) {
    rows += `<tr><td>${i}</td>${"<td></td>".repeat(6)}</tr>`
}
document.getElementById("report-rows").innerHTML = rows
```
FILE: styles.css
```css
* {
    box-sizing: border-box;
}

body {
    margin: 0;
    background: #1c1c1c;
    color: #f2f2f2;
    font-family: "Open Sans", "Noto Sans", sans-serif;
    font-size: 12px;
}

a {
    color: inherit;
    text-decoration: none;
}

button {
    padding: 0;
    border: 0;
    background: none;
    color: inherit;
    font: inherit;
}

svg {
    display: block;
    flex: none;
    overflow: visible;
}

.glyph {
    font-family: Inter, sans-serif;
    font-weight: 700;
    text-anchor: middle;
}

.glyph.serif {
    font-family: "Liberation Serif", serif;
    font-style: italic;
}

.sprite {
    position: absolute;
    width: 0;
    height: 0;
}

.desktop {
    display: flex;
    flex-direction: column;
    height: 100vh;
    overflow: hidden;
}

.windows {
    display: flex;
    flex: 1;
    min-height: 0;
}

/* browser window */

.window {
    display: flex;
    flex-direction: column;
    flex: 1;
    min-width: 0;
    padding: 0 4px 4px;
    border: 1px solid #6f6f6f;
    background: #3b3b3b;
}

.window.active {
    position: relative;
    z-index: 1;
    box-shadow: 0 0 24px rgba(0, 0, 0, .6);
}

.tabstrip {
    display: flex;
    flex: none;
    align-items: center;
    height: 39px;
    margin: 0 -4px;
    padding: 3px 4px 0;
    background: #2d2d2d;
    color: #c4c4c4;
}

.active .tabstrip {
    background: #202020;
    color: #fff;
}

.tab-menu {
    display: grid;
    place-items: center;
    width: 32px;
    height: 32px;
    margin-bottom: 4px;
    border-radius: 8px;
    background: #333;
}

.active .tab-menu {
    background: #2c2c2c;
}

.tab {
    display: flex;
    align-items: center;
    width: 240px;
    height: 36px;
    margin-left: 4px;
    padding: 0 11px 2px 9px;
    border-radius: 8px 8px 0 0;
    background: #3b3b3b;
}

.tab-title {
    flex: 1;
    margin: 0 2px 0 7px;
    overflow: hidden;
    white-space: nowrap;
    -webkit-mask: linear-gradient(to left, transparent, #000 16px);
    mask: linear-gradient(to left, transparent, #000 16px);
}

.new-tab {
    margin: 0 0 2px 13px;
}

.controls {
    display: flex;
    gap: 36px;
    margin: 0 14px 2px auto;
}

.window:not(.active) .controls,
.window:not(.active) .new-tab {
    color: #8a8a8a;
}

.addressbar {
    display: flex;
    flex: none;
    align-items: center;
    height: 40px;
    padding-left: 8px;
}

.reload {
    margin: 0 12px 0 20px;
}

.url {
    display: flex;
    flex: 1;
    align-items: center;
    height: 32px;
    padding: 0 7px 0 8px;
    border: 1px solid #6a6a6a;
    border-radius: 16px;
    background: #333;
}

.url input {
    flex: 1;
    min-width: 0;
    margin-left: 8px;
    padding: 0;
    border: 0;
    outline: 0;
    background: none;
    color: #ececec;
    font: 13px "Noto Sans", sans-serif;
}

.dim {
    margin-left: 12px;
    color: #a0a0a0;
}

.extensions {
    display: flex;
    align-items: center;
    gap: 12px;
    margin: 0 12px;
}

.extensions svg:nth-child(2) {
    margin-left: 8px;
}

.vline {
    width: 1px;
    height: 16px;
    background: #666;
}

.avatar {
    width: 24px;
    height: 24px;
    margin: 0 4px;
    overflow: hidden;
    border-radius: 50%;
    background: #fff;
    color: #111;
    font: 22px/23px "Noto Sans CJK TC", sans-serif;
    text-align: center;
}

.chat {
    display: flex;
    align-items: center;
    gap: 7px;
    width: 71px;
    height: 32px;
    padding-left: 7px;
    border-radius: 16px;
    background: #1c1c1c;
}

.bookmarks {
    display: flex;
    flex: none;
    align-items: center;
    height: 34px;
    padding: 0 25px 2px 8px;
}

.bookmarks .vline {
    margin: 0 14px;
}

.bookmarks a {
    display: flex;
    align-items: center;
    gap: 6px;
    margin-right: 20px;
}

.overflow {
    margin-left: auto;
}

/* page inside the window */

.page {
    position: relative;
    display: flex;
    flex: 1;
    min-height: 0;
    overflow: hidden;
    border-radius: 8px;
    background: #fff;
    color: #444;
    font-family: Inter, sans-serif;
}

.side {
    display: flex;
    flex-direction: column;
    flex: none;
    align-items: center;
    width: 100px;
    padding: 24px 0 22px;
    background: linear-gradient(#2f46bf, #643dd2);
    color: rgba(255, 255, 255, .77);
    font: 900 13px/18px Lato, sans-serif;
    text-align: center;
}

.side a {
    position: relative;
    display: flex;
    flex-direction: column;
    align-items: center;
    gap: 7px;
}

.side-main {
    display: flex;
    flex-direction: column;
    justify-content: space-between;
    height: 491px;
}

.badge {
    position: absolute;
    top: -3px;
    left: 50%;
    width: 22px;
    margin-left: -8px;
    border-radius: 9px;
    background: #bb4327;
    color: #fff;
    font: 700 11px/17px Inter, sans-serif;
}

.side .create {
    gap: 3px;
    margin-top: 21px;
}

.create span {
    display: grid;
    place-items: center;
    width: 30px;
    height: 31px;
    border-radius: 50%;
    background: rgba(255, 255, 255, .28);
    color: #fff;
}

.side hr {
    width: 60px;
    height: 2px;
    margin: 23px 0 20px;
    border: 0;
    background: rgba(255, 255, 255, .4);
}

.side .space {
    gap: 1px;
}

.space span {
    display: grid;
    place-items: center;
    width: 36px;
    height: 35px;
    border: 2px solid rgba(255, 255, 255, .35);
    border-radius: 8px;
    background: rgba(255, 255, 255, .28);
}

.side-bottom {
    display: flex;
    flex-direction: column;
    gap: 26px;
    margin-top: auto;
}

.app {
    display: flex;
    flex: 1;
    flex-direction: column;
    min-width: 0;
}

.menubar {
    display: flex;
    align-items: center;
    height: 62px;
    padding: 0 9px 0 0;
    overflow: hidden;
    font-size: 15px;
}

.menubar a {
    margin-right: 21px;
    padding-bottom: 2px;
    white-space: nowrap;
}

.menubar .wide {
    margin-right: 31px;
}

.menubar .cut {
    margin: 0 29px 0 -13px;
}

.menubar .doc {
    margin-left: -15px;
}

.fav {
    margin-left: 13px;
}

.share {
    display: flex;
    align-items: center;
    gap: 17px;
    width: 108px;
    height: 44px;
    margin-left: auto;
    padding-left: 18px;
    border-radius: 4px;
    background: #117e84;
    color: #fff;
    font-weight: 700;
}

.toolbar {
    display: flex;
    flex: none;
    align-items: center;
    height: 46px;
    padding: 0 12px 2px 16px;
    border-bottom: 1px solid #d6d6d6;
    font-size: 14px;
    font-weight: 600;
}

.toolbar > svg {
    margin-right: 22px;
}

.toolbar > .expand {
    margin: 0 0 0 auto;
}

.off {
    color: #c4c4c4;
}

.sep {
    width: 2px;
    height: 28px;
    margin-right: 21px;
    background: #e0e0e0;
}

.drop {
    display: flex;
    align-items: center;
}

.drop select {
    appearance: none;
    padding: 0;
    border: 0;
    outline: 0;
    background: none;
    color: inherit;
    font: inherit;
}

.view {
    margin-right: 23px;
}

.view select {
    width: 42px;
    margin-left: 11px;
}

.filter {
    margin-right: 16px;
}

.filter select {
    width: 76px;
    margin-left: 11px;
}

.font {
    margin: 0 24px 0 8px;
}

.font select {
    width: 45px;
}

.size {
    margin: 0 24px 0 7px;
}

.size select {
    width: 30px;
}

.filter-btn {
    display: flex;
    align-items: center;
    gap: 4px;
    margin-right: 27px;
}

.work {
    display: flex;
    flex: 1;
    min-height: 0;
}

.sheet {
    position: relative;
    display: flex;
    flex: 1;
    flex-direction: column;
    min-width: 0;
}

.grid {
    position: relative;
    flex: 1;
    min-height: 0;
    overflow: hidden;
}

.grid table {
    width: 100%;
    table-layout: fixed;
    border-spacing: 0;
}

.c-num { width: 58px; }
.c-print { width: 188px; }
.c-panel { width: 111px; }
.c-rest { width: 52px; }
.c-data { width: 165px; }
.c-before { width: 164px; }
.c-after { width: 166px; }

th {
    position: relative;
    height: 89px;
    padding: 15px 8px 0 10px;
    overflow: hidden;
    border-bottom: 2px solid #52659f;
    background: linear-gradient(#dedede, #dedede) right bottom / 1px 74px no-repeat #f8f7f5;
    font-size: 14px;
    font-weight: 600;
    line-height: 17px;
    text-align: left;
    vertical-align: top;
}

th:first-child,
th:last-child {
    background: #f8f7f5;
}

.tracker th:last-child {
    padding: 15px 0 0 12px;
    white-space: nowrap;
}

.mark {
    position: absolute;
    bottom: 5px;
    left: 12px;
    color: #777;
}

.scrolled {
    padding-left: 0;
}

.scrolled div {
    margin-left: -6px;
    white-space: nowrap;
}

.report .scrolled div {
    margin-left: -25px;
}

th.sel {
    padding: 9px 0 0;
    border: 0;
    background: #f8f7f5;
}

.sel div {
    position: relative;
    height: 80px;
    padding: 6px 11px;
    border-radius: 2px 2px 0 0;
    background: #5e93d3;
    color: #fff;
}

.sel button {
    position: absolute;
    top: 10px;
    right: 13px;
}

td {
    height: 28px;
    padding: 1px 0 0 7px;
    border-right: 1px solid #eee;
    border-bottom: 1px solid #e0e0e0;
    color: #000;
    font: 15px/24px "Liberation Sans", Arial, sans-serif;
    vertical-align: top;
    white-space: nowrap;
}

td:first-child {
    padding: 4px 27px 0 0;
    border-right: 0;
    color: #999;
    font: 13px/20px Inter, sans-serif;
    text-align: right;
}

.tracker td:first-child {
    padding-top: 6px;
    color: #808080;
}

td:last-child {
    border-right: 0;
}

.s td,
.report tr:nth-child(odd) td {
    height: 27px;
}

.tall td {
    height: 45px;
}

.tracker td {
    border-color: #eee;
}

.copied {
    outline: 2px dashed #5695dd;
    outline-offset: -1px;
}

.current {
    outline: 2px solid #a7a7a7;
    outline-offset: -1px;
}

.report td:nth-child(5) {
    border-right: 2px solid #5e93d3;
    border-bottom-color: #cdd6e0;
    border-left: 2px solid #5e93d3;
    background: #cbdbf1;
}

.report tr:first-child td:nth-child(5) {
    background: #eef3fc;
}

.vbar {
    position: absolute;
    top: 89px;
    right: 0;
    bottom: 0;
    display: flex;
    flex-direction: column;
    align-items: center;
    width: 16px;
    padding: 5px 0 4px;
    background: #fff;
}

.up {
    transform: rotate(90deg);
}

.down {
    margin-top: auto;
    transform: rotate(-90deg);
}

.vbar,
.hbar {
    color: #9e9e9e;
}

.thumb {
    width: 9px;
    height: 9px;
    border-radius: 5px;
    background: #9e9e9e;
}

.tracker .vbar .thumb {
    height: 141px;
    margin-top: 162px;
}

.report .vbar .thumb {
    height: 324px;
    margin-top: 5px;
}

.hbars {
    display: flex;
    height: 16px;
    background: #fff;
}

.corner {
    position: relative;
    width: 58px;
    height: 19px;
    margin-top: -3px;
    background: #f7f6f4;
}

.hbar {
    display: flex;
    flex: 1;
    align-items: center;
    padding: 0 5px;
}

.tracker .hbar .thumb {
    width: 100px;
    margin-left: 149px;
}

.tracker .hbar.panel {
    flex: 0 0 111px;
    padding: 0 20px 0 7px;
}

.tracker .panel .thumb {
    width: 17px;
    margin-left: 5px;
}

.report .hbar {
    padding-right: 20px;
}

.report .hbar .thumb {
    width: 24px;
    margin-left: 52px;
}

.next {
    margin-left: auto;
    transform: scaleX(-1);
}

.splitter {
    position: absolute;
    top: 9px;
    right: 109px;
    bottom: 0;
    width: 2px;
    background: #bbb;
    box-shadow: 2px 0 3px rgba(0, 0, 0, .1);
}

.rail {
    width: 58px;
    padding: 18px 0 0 17px;
    border-left: 1px solid #d9d9d9;
}

.rail div {
    display: flex;
    flex-direction: column;
    justify-content: space-between;
    height: 602px;
}

.pagebar {
    display: flex;
    align-items: center;
    height: 15px;
    padding: 0 5px;
    background: #0a2c54;
    color: #10243b;
}

.pagebar i {
    flex: 1;
    height: 9px;
    margin: 0 10px 0 42px;
    border-radius: 5px;
    background: #10243b;
}

.overlay {
    position: absolute;
    inset: 0;
    display: grid;
    place-items: center;
    padding: 2px 0 0 2px;
    background: rgba(219, 219, 219, .43);
}

.saving {
    display: flex;
    flex-direction: column;
    align-items: center;
    gap: 10px;
    width: 244px;
    height: 90px;
    padding-top: 14px;
    border: 1px solid #b4b4b4;
    border-radius: 2px;
    background: #f3f3f3;
    color: #222;
    font-size: 14px;
}

/* taskbar */

.taskbar {
    display: grid;
    flex: none;
    grid-template-columns: 1fr auto 1fr;
    align-items: center;
    height: 48px;
    padding: 0 20px;
    box-shadow: inset 0 1px #303030;
    line-height: 16px;
}

.weather {
    position: relative;
    display: flex;
    align-items: center;
    gap: 3px;
    color: #c8c8c8;
    text-align: left;
}

.weather b {
    color: #fff;
    font-weight: 400;
}

.alert {
    position: absolute;
    top: -2px;
    left: 9px;
    width: 16px;
    border-radius: 50%;
    background: #ff99a4;
    color: #111;
    line-height: 16px;
    text-align: center;
}

.alert.red {
    top: 2px;
    left: 23px;
    background: #c42b1c;
    color: #fff;
}

.apps {
    display: flex;
    align-items: center;
}

.apps button {
    position: relative;
    display: grid;
    place-items: center;
    width: 44px;
    height: 40px;
}

.find {
    display: flex;
    align-items: center;
    width: 220px;
    height: 32px;
    margin: 0 2px 0 3px;
    padding: 0 15px 0 11px;
    border: 1px solid #505050;
    border-radius: 16px;
    background: #3a3a3a;
}

.find input {
    flex: 1;
    min-width: 0;
    margin: 0 9px;
    padding: 0;
    border: 0;
    background: none;
    font: inherit;
}

.find input::placeholder {
    color: #cfcfcf;
}

.running::after,
.focused::after {
    content: "";
    position: absolute;
    bottom: 1px;
    width: 6px;
    height: 3px;
    border-radius: 2px;
    background: #9a9a9a;
}

.apps .focused {
    width: 40px;
    margin: 0 2px;
    border-radius: 4px;
    background: #2e2e2e;
}

.focused::after {
    width: 16px;
    background: #4cc2ff;
}

.tray {
    display: flex;
    align-items: center;
    justify-content: flex-end;
    gap: 9px;
    text-align: right;
}
```
